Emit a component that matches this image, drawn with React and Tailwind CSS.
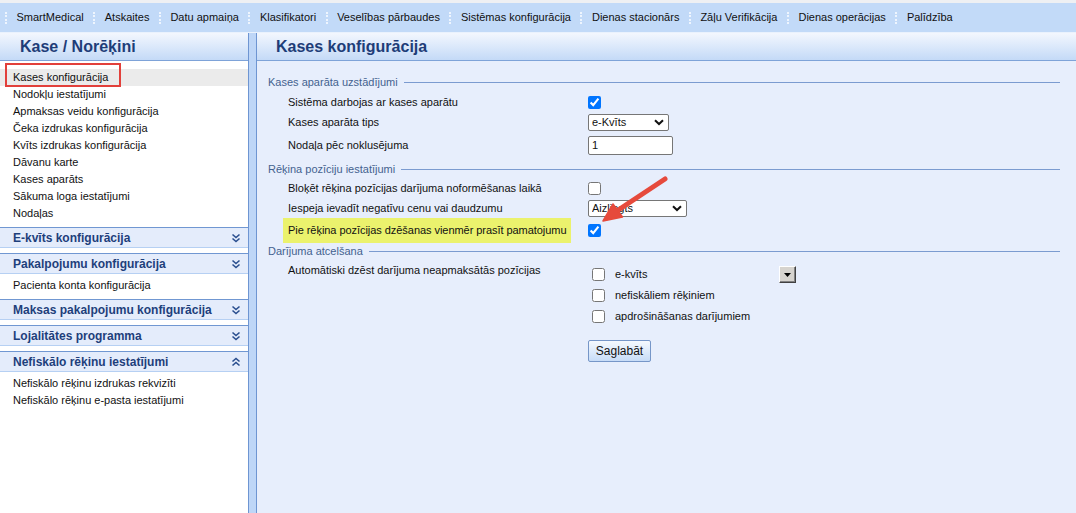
import React from "react";

const menuItems = [
  "SmartMedical",
  "Atskaites",
  "Datu apmaiņa",
  "Klasifikatori",
  "Veselības pārbaudes",
  "Sistēmas konfigurācija",
  "Dienas stacionārs",
  "Zāļu Verifikācija",
  "Dienas operācijas",
  "Palīdzība",
];

const kaseItems = [
  "Kases konfigurācija",
  "Nodokļu iestatījumi",
  "Apmaksas veidu konfigurācija",
  "Čeka izdrukas konfigurācija",
  "Kvīts izdrukas konfigurācija",
  "Dāvanu karte",
  "Kases aparāts",
  "Sākuma loga iestatījumi",
  "Nodaļas",
];

function TopMenu() {
  return (
    <div className="h-[33px] shrink-0 border-t-[3px] border-t-[#eef0f3] border-b border-b-[#eaf2fd] bg-[#c2daf8] flex items-center pl-[5px]">
      {menuItems.map((item) => (
        <div key={item} className="flex items-center">
          <span className="w-[2px] h-[12px] border-l-2 border-dotted border-[#eef5fe]" />
          <span className="px-[9.5px]">{item}</span>
        </div>
      ))}
    </div>
  );
}

function PanelHeader({ title, pad }) {
  return (
    <div
      className={`h-[28px] shrink-0 flex items-center bg-linear-to-b from-[#f3f7fe] to-[#c4daf7] border-b border-[#7ea3d8] ${pad}`}
    >
      <span className="text-[16px] font-bold text-[#1e3d78]">{title}</span>
    </div>
  );
}

function Chevrons({ up }) {
  return (
    <svg width="10" height="10" viewBox="0 0 10 10" fill="none" stroke="#2a4f8f" strokeWidth="1.6">
      {up ? (
        <>
          <path d="M1.5 4.5 L5 1.5 L8.5 4.5" />
          <path d="M1.5 8.5 L5 5.5 L8.5 8.5" />
        </>
      ) : (
        <>
          <path d="M1.5 1.5 L5 4.5 L8.5 1.5" />
          <path d="M1.5 5.5 L5 8.5 L8.5 5.5" />
        </>
      )}
    </svg>
  );
}

function SectionHeader({ title, up }) {
  return (
    <div className="mt-[5px] h-[21px] flex items-center justify-between bg-[#e4ecfb] border-t border-t-[#7097d2] border-b border-b-[#b6d0f3] pl-[13px] pr-[7px]">
      <span className="text-[12px] font-bold text-[#1e3f7b]">{title}</span>
      <Chevrons up={up} />
    </div>
  );
}

function Item({ children }) {
  return <div className="h-[17px] leading-[17px] pl-[13px]">{children}</div>;
}

function Legend({ children, className }) {
  return (
    <div className={`flex items-center h-[14px] text-[#44628f] ${className}`}>
      <span>{children}</span>
      <span className="flex-1 h-px bg-[#7b9bd0] ml-[6px]" />
    </div>
  );
}

function Row({ label, children, className = "h-[20px]" }) {
  return (
    <div className={`flex items-center pl-[20px] ${className}`}>
      <div className="w-[300px] whitespace-nowrap">{label}</div>
      {children}
    </div>
  );
}

function Select({ value, width }) {
  return (
    <div className={`relative h-[17px] ${width}`}>
      <select
        defaultValue={value}
        className="appearance-none w-full h-full bg-white border border-[#767676] rounded-[2px] pl-[3px] text-[11px] leading-[15px]"
      >
        <option>{value}</option>
      </select>
      <svg
        className="absolute right-[5px] top-[5px] pointer-events-none"
        width="10"
        height="7"
        viewBox="0 0 10 7"
        fill="none"
        stroke="#111"
        strokeWidth="2"
      >
        <path d="M1 1.2 L5 5 L9 1.2" />
      </svg>
    </div>
  );
}

function Check({ checked }) {
  return <input type="checkbox" defaultChecked={checked} className="w-[13px] h-[13px] m-0 accent-[#0075ff]" />;
}

export default function App() {
  return (
    <div className="relative w-[1076px] h-[513px] overflow-hidden flex flex-col bg-white font-['Liberation_Sans',Arial,sans-serif] text-[11px] text-[#111]">
      <TopMenu />
      <div className="flex flex-1 min-h-0">
        {/* left menu */}
        <aside className="w-[249px] shrink-0 border-r border-[#6e95d2] bg-white flex flex-col">
          <PanelHeader title="Kase / Norēķini" pad="pl-[20px]" />
          <div className="pt-[8px]">
            {kaseItems.map((item, i) =>
              i === 0 ? (
                <div key={item} className="relative h-[17px] leading-[17px] pl-[13px] bg-[#ebebeb]">
                  {item}
                  <span className="absolute left-[5px] top-[-6px] w-[116px] h-[24px] border-2 border-[#e2403b]" />
                </div>
              ) : (
                <Item key={item}>{item}</Item>
              )
            )}
          </div>
          <SectionHeader title="E-kvīts konfigurācija" />
          <SectionHeader title="Pakalpojumu konfigurācija" />
          <div className="pt-[3px]">
            <Item>Pacienta konta konfigurācija</Item>
          </div>
          <SectionHeader title="Maksas pakalpojumu konfigurācija" />
          <SectionHeader title="Lojalitātes programma" />
          <SectionHeader title="Nefiskālo rēķinu iestatījumi" up />
          <div className="pt-[3px]">
            <Item>Nefiskālo rēķinu izdrukas rekvizīti</Item>
            <Item>Nefiskālo rēķinu e-pasta iestatījumi</Item>
          </div>
        </aside>

        {/* splitter */}
        <div className="w-[8px] shrink-0 bg-[#bed6f7] border-r border-[#6e95d2]" />

        {/* main */}
        <main className="flex-1 bg-[#e7eefc] flex flex-col">
          <PanelHeader title="Kases konfigurācija" pad="pl-[19px]" />
          <div className="pl-[11px] pr-[16px]">
            <Legend className="mt-[14px]">Kases aparāta uzstādījumi</Legend>
            <Row label="Sistēma darbojas ar kases aparātu" className="h-[20px] mt-[3px]">
              <Check checked />
            </Row>
            <Row label="Kases aparāta tips">
              <Select value="e-Kvīts" width="w-[81px]" />
            </Row>
            <Row label="Nodaļa pēc noklusējuma" className="h-[22px] mt-[2px]">
              <input
                defaultValue="1"
                className="w-[85px] h-[19px] bg-white border border-[#767676] rounded-[2px] pl-[3px] text-[11px]"
              />
            </Row>

            <Legend className="mt-[6px]">Rēķina pozīciju iestatījumi</Legend>
            <Row label="Bloķēt rēķina pozīcijas darījuma noformēšanas laikā" className="h-[20px] mt-[2px]">
              <Check />
            </Row>
            <Row label="Iespeja ievadīt negatīvu cenu vai daudzumu">
              <Select value="Aizliegts" width="w-[99px]" />
            </Row>
            <div className="flex items-center pl-[15px] h-[25px]">
              <div className="w-[305px]">
                <span className="flex items-center w-[288px] h-[25px] pl-[5px] bg-[#ebf26d] whitespace-nowrap tracking-[-0.05px]">
                  Pie rēķina pozīcijas dzēšanas vienmēr prasīt pamatojumu
                </span>
              </div>
              <Check checked />
            </div>

            <Legend className="mt-[1px]">Darījuma atcelšana</Legend>
            <div className="flex pl-[20px]">
              <div className="w-[300px] pt-[5px] leading-[14px] whitespace-nowrap">
                Automātiski dzēst darījuma neapmaksātās pozīcijas
              </div>
              <div className="flex flex-col">
                <div className="mt-[6px] pl-[4px]">
                  <div className="h-[21px] flex items-center">
                    <Check />
                    <span className="ml-[10px] w-[164px]">e-kvīts</span>
                    <span className="w-[17px] h-[17px] flex items-center justify-center bg-[#d6d3ce] border border-t-white border-l-white border-r-[#404040] border-b-[#404040] shadow-[inset_-1px_-1px_0_#808080]">
                      <svg width="7" height="4" viewBox="0 0 7 4">
                        <path d="M0 0 H7 L3.5 4 Z" fill="#000" />
                      </svg>
                    </span>
                  </div>
                  <div className="h-[21px] flex items-center">
                    <Check />
                    <span className="ml-[10px]">nefiskāliem rēķiniem</span>
                  </div>
                  <div className="h-[21px] flex items-center">
                    <Check />
                    <span className="ml-[10px]">apdrošināšanas darījumiem</span>
                  </div>
                </div>
                <button className="mt-[13px] w-[63px] h-[22px] border border-[#7696c8] rounded-[2px] bg-linear-to-b from-[#f5f9fe] to-[#c7dcf7] text-[12px] text-[#111]">
                  Saglabāt
                </button>
              </div>
            </div>
          </div>
        </main>
      </div>

      {/* annotation arrow */}
      <svg className="absolute left-[595px] top-[170px] pointer-events-none" width="80" height="60" viewBox="0 0 80 60">
        <line x1="70" y1="9" x2="21" y2="41.5" stroke="#e64a3c" strokeWidth="5" strokeLinecap="round" />
        <path d="M8 51 L27.5 47 L18 34 Z" fill="#e64a3c" stroke="#e64a3c" strokeWidth="1.5" strokeLinejoin="round" />
      </svg>
    </div>
  );
}
